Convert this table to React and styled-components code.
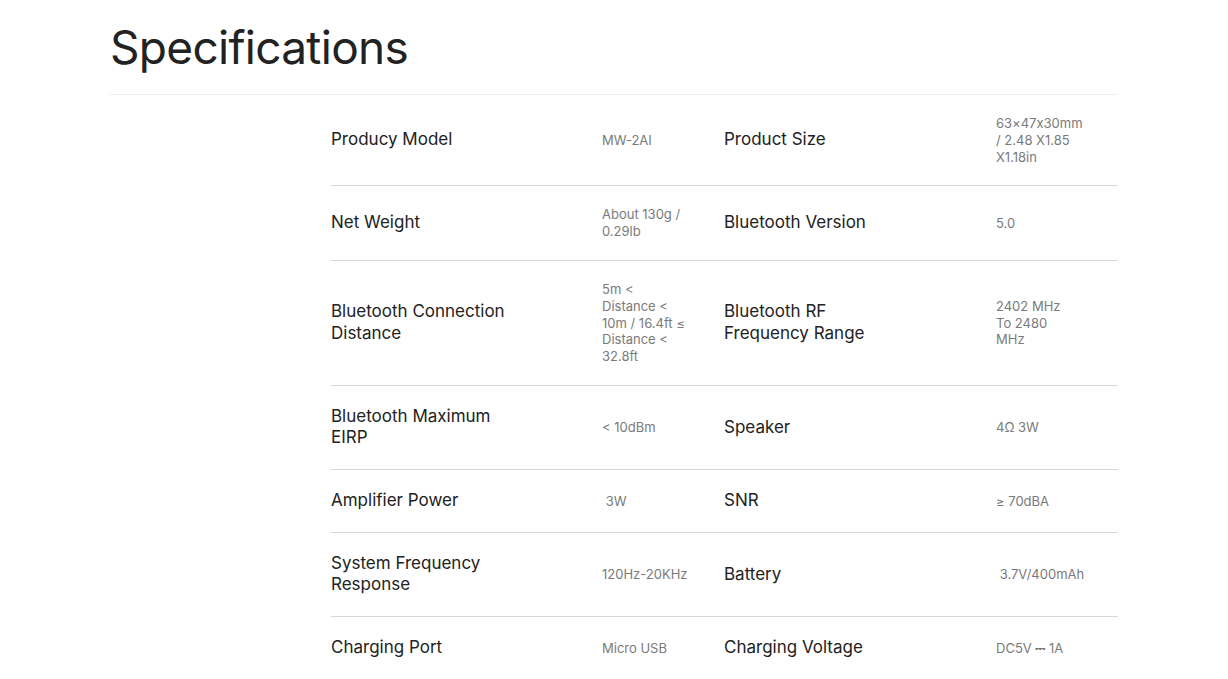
import React from "react";
import styled, { createGlobalStyle } from "styled-components";

const Global = createGlobalStyle`
  body {
    margin: 0;
    background: #fff;
    font-family: Inter, "Noto Sans", sans-serif;
    font-feature-settings: "calt" 0;
  }
`;

const Page = styled.div`
  max-width: 1008px;
  margin: 0 auto;
`;

const Header = styled.div`
  padding: 18px 0 18px;
  border-bottom: 1px solid #efefef;
`;

const Title = styled.h1`
  margin: 0;
  font-size: 46px;
  line-height: 58px;
  font-weight: 400;
  color: #222;
  letter-spacing: -0.7px;
`;

const Table = styled.div`
  margin-left: 221px;
`;

const Row = styled.div`
  display: grid;
  grid-template-columns: 271px 122px 272px 122px;
  align-items: center;
  min-height: 22px;
  padding: 20px 0;
  border-bottom: 1px solid ${(p) => (p.last ? "transparent" : "#d8d8d8")};
`;

const Label = styled.div`
  max-width: 186px;
  font-size: 17px;
  line-height: 21.5px;
  color: #222;
`;

const Value = styled.div`
  max-width: ${(p) => (p.narrow ? "80px" : "86px")};
  font-size: 13px;
  line-height: 16.8px;
  color: #7a7a7a;
`;

const specs = [
  ["Producy Model", "MW-2AI", "Product Size", "63\u00d747x30mm / 2.48 X1.85 X1.18in"],
  ["Net Weight", "About 130g / 0.29lb", "Bluetooth Version", "5.0"],
  [
    "Bluetooth Connection Distance",
    "5m < Distance < 10m / 16.4ft \u2264 Distance < 32.8ft",
    "Bluetooth RF Frequency Range",
    "2402 MHz To 2480 MHz",
  ],
  ["Bluetooth Maximum EIRP", "< 10dBm", "Speaker", "4\u03a9 3W"],
  ["Amplifier Power", "\u00a03W", "SNR", "\u2265 70dBA"],
  ["System Frequency Response", "120Hz-20KHz", "Battery", "\u00a03.7V/400mAh"],
  ["Charging Port", "Micro USB", "Charging Voltage", "DC5V \u2393 1A"],
];

export default function App() {
  return (
    <Page>
      <Global />
      <Header>
        <Title>Specifications</Title>
      </Header>
      <Table>
        {specs.map(([l1, v1, l2, v2], i) => (
          <Row key={l1} last={i === specs.length - 1}>
            <Label>{l1}</Label>
            <Value>{v1}</Value>
            <Label>{l2}</Label>
            <Value narrow>{v2}</Value>
          </Row>
        ))}
      </Table>
    </Page>
  );
}
